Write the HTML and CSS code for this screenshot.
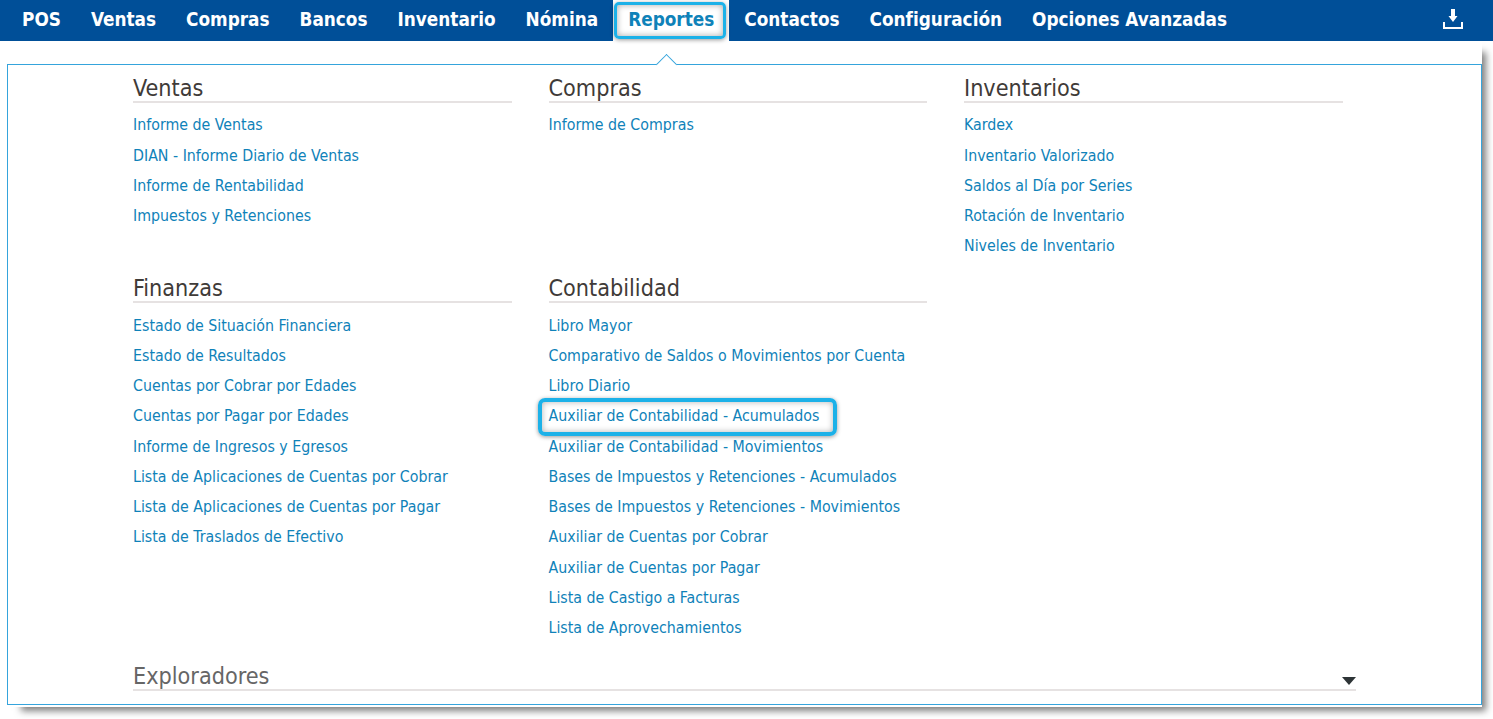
FILE: index.html
```html
<!DOCTYPE html>
<html lang="es">
<head>
<meta charset="utf-8">
<title>Reportes</title>
<link rel="stylesheet" href="styles.css">
</head>
<body>
<nav class="topbar">
  <ul class="menu">
    <li><a href="#">POS</a></li>
    <li><a href="#">Ventas</a></li>
    <li><a href="#">Compras</a></li>
    <li><a href="#">Bancos</a></li>
    <li><a href="#">Inventario</a></li>
    <li><a href="#">Nómina</a></li>
    <li class="active"><a href="#">Reportes</a></li>
    <li><a href="#">Contactos</a></li>
    <li><a href="#">Configuración</a></li>
    <li><a href="#">Opciones Avanzadas</a></li>
  </ul>
  <svg class="download" width="20" height="20" viewBox="0 0 20 20" aria-hidden="true">
    <path d="M8 0h4v7h2.500L10 13 5.500 7H8z" fill="#fff"/>
    <path d="M1 13v6h18v-6" fill="none" stroke="#fff" stroke-width="2"/>
  </svg>
</nav>
<div class="panel-wrap">
<main class="panel">
  <span class="caret"></span>
  <div class="grid">
    <section class="group">
      <h2>Ventas</h2>
      <a href="#">Informe de Ventas</a>
      <a href="#">DIAN - Informe Diario de Ventas</a>
      <a href="#">Informe de Rentabilidad</a>
      <a href="#">Impuestos y Retenciones</a>
    </section>
    <section class="group">
      <h2>Compras</h2>
      <a href="#">Informe de Compras</a>
    </section>
    <section class="group">
      <h2>Inventarios</h2>
      <a href="#">Kardex</a>
      <a href="#">Inventario Valorizado</a>
      <a href="#">Saldos al Día por Series</a>
      <a href="#">Rotación de Inventario</a>
      <a href="#">Niveles de Inventario</a>
    </section>
    <section class="group">
      <h2>Finanzas</h2>
      <a href="#">Estado de Situación Financiera</a>
      <a href="#">Estado de Resultados</a>
      <a href="#">Cuentas por Cobrar por Edades</a>
      <a href="#">Cuentas por Pagar por Edades</a>
      <a href="#">Informe de Ingresos y Egresos</a>
      <a href="#">Lista de Aplicaciones de Cuentas por Cobrar</a>
      <a href="#">Lista de Aplicaciones de Cuentas por Pagar</a>
      <a href="#">Lista de Traslados de Efectivo</a>
    </section>
    <section class="group">
      <h2>Contabilidad</h2>
      <a href="#">Libro Mayor</a>
      <a href="#">Comparativo de Saldos o Movimientos por Cuenta</a>
      <a href="#">Libro Diario</a>
      <a href="#" class="marked">Auxiliar de Contabilidad - Acumulados</a>
      <a href="#">Auxiliar de Contabilidad - Movimientos</a>
      <a href="#">Bases de Impuestos y Retenciones - Acumulados</a>
      <a href="#">Bases de Impuestos y Retenciones - Movimientos</a>
      <a href="#">Auxiliar de Cuentas por Cobrar</a>
      <a href="#">Auxiliar de Cuentas por Pagar</a>
      <a href="#">Lista de Castigo a Facturas</a>
      <a href="#">Lista de Aprovechamientos</a>
    </section>
  </div>
  <div class="explorers">
    <h2>Exploradores</h2>
    <span class="arrow"></span>
  </div>
</main>
</div>
</body>
</html>
```
FILE: styles.css
```css
* { box-sizing: border-box; }
html, body { margin: 0; height: 719px; overflow: hidden; background: #fff; }
body { font-family: "DejaVu Sans Condensed", "DejaVu Sans", sans-serif; }
.topbar {
  position: relative;
  z-index: 2;
  height: 41px;
  background: #004f98;
  display: flex;
  align-items: stretch;
  justify-content: space-between;
  padding-left: 7px;
}
.menu { list-style: none; margin: 0; padding: 0; display: flex; }
.menu li { display: flex; align-items: center; }
.menu a {
  color: #fff;
  font-size: 18.8px;
  font-weight: 700;
  line-height: 39px;
  margin-bottom: 2px;
  text-decoration: none;
  padding: 0 15px;
}
.menu .active { background: #fff; position: relative; }
.menu .active a { color: #0f82b9; }
.menu .active::after {
  content: "";
  position: absolute;
  left: 1px;
  right: 3px;
  top: 2px;
  bottom: 2px;
  border: 3px solid #1cb1e8;
  border-radius: 5px;
  box-shadow: 0 1px 4px rgba(0,0,0,.4), inset 0 0 6px rgba(0,0,0,.35);
}
.download { margin: 9px 30px 0 0; }
.panel-wrap {
  position: relative;
  z-index: 1;
  margin: 23px 11px 0 7px;
  height: 641px;
}
.panel-wrap::before {
  content: "";
  position: absolute;
  left: 2px;
  right: 0;
  top: -24px;
  bottom: -2px;
  background: #fff;
  box-shadow: 8px 8px 7px -4px rgba(0,0,0,.5);
}
.panel {
  position: relative;
  height: 641px;
  border: 1px solid #35a4dc;
  background: #fff;
  padding: 8px 125px 0;
}
.caret {
  position: absolute;
  top: -8.5px;
  left: 651px;
  width: 15px;
  height: 15px;
  background: #fff;
  border-top: 1px solid #35a4dc;
  border-left: 1px solid #35a4dc;
  transform: rotate(45deg);
}
.grid {
  display: grid;
  grid-template-columns: repeat(3, 378.5px);
  column-gap: 37px;
  grid-template-rows: 200.2px auto;
}
.group a {
  display: block;
  width: fit-content;
  color: #0f82b9;
  font-size: 15.8px;
  line-height: 30.25px;
  text-decoration: none;
  position: relative;
}
h2 {
  margin: 0 0 7.4px;
  padding-top: 2px;
  font-size: 23.2px;
  font-weight: 400;
  line-height: 26px;
  color: #3f3b38;
  border-bottom: 2px solid #e6e2e2;
  position: relative;
}
.marked::after {
  content: "";
  position: absolute;
  left: -11px;
  right: -18px;
  top: -3px;
  bottom: -4px;
  border: 4px solid #1cb1e8;
  border-radius: 7px;
  box-shadow: 0 1px 4px rgba(0,0,0,.4), inset 0 0 6px rgba(0,0,0,.3);
}
.explorers {
  position: absolute;
  left: 125px;
  width: 1223px;
  top: 596px;
}
.explorers h2 { color: #666; margin: 0; }
.arrow {
  position: absolute;
  right: 0;
  top: 16px;
  border-left: 7px solid transparent;
  border-right: 7px solid transparent;
  border-top: 8px solid #2d3436;
}
```
